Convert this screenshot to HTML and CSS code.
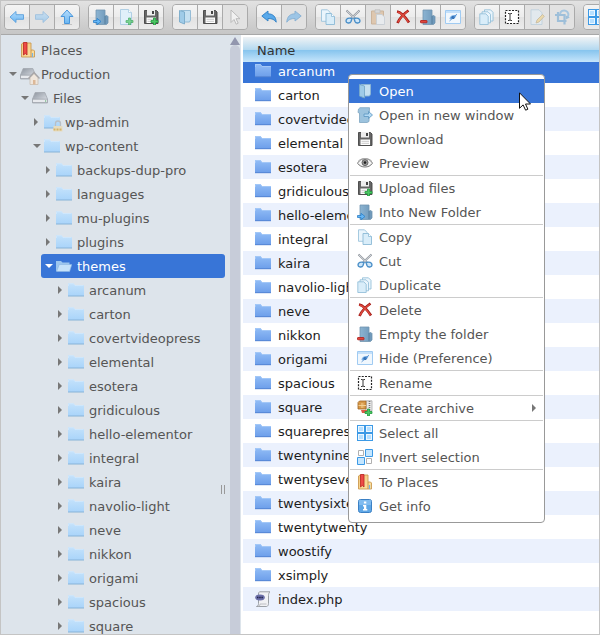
FILE: index.html
```html
<!DOCTYPE html>
<html lang="en">
<head>
    <meta charset="UTF-8">
    <meta name="viewport" content="width=device-width, initial-scale=1.0">
    <title>File Manager</title>
    <link rel="stylesheet" href="styles.css">
</head>
<body>

    <svg class="sprite" aria-hidden="true">
        <defs>
            <linearGradient id="gBlue" x1="0" y1="0" x2="0" y2="1"><stop offset="0" stop-color="#b4dcfc"/><stop offset="1" stop-color="#6ab6f2"/></linearGradient>
            <linearGradient id="gDir" x1="0" y1="0" x2="0" y2="1"><stop offset="0" stop-color="#92bdf6"/><stop offset="1" stop-color="#6c9eea"/></linearGradient>
            <linearGradient id="gNav" x1="0" y1="0" x2="0" y2="1"><stop offset="0" stop-color="#c4e2fb"/><stop offset="1" stop-color="#a9d4fa"/></linearGradient>
            <linearGradient id="gSteel" x1="0" y1="0" x2="1" y2="0"><stop offset="0" stop-color="#8cb4d2"/><stop offset="1" stop-color="#6c96b8"/></linearGradient>
            <linearGradient id="gDrive" x1="0" y1="0" x2="1" y2="1"><stop offset="0" stop-color="#8d949e"/><stop offset="1" stop-color="#e6eaf0"/></linearGradient>
            <linearGradient id="gGold" x1="0" y1="0" x2="1" y2="1"><stop offset="0" stop-color="#f3c87c"/><stop offset="1" stop-color="#fbe3a6"/></linearGradient>
        </defs>

        <symbol id="back" viewBox="0 0 16 16"><path d="M1 8 7 2.500v3.200h7.500v4.600H7v3.200z" fill="url(#gBlue)" stroke="#5a9fdc" stroke-width=".9"/></symbol>
        <symbol id="forward" viewBox="0 0 16 16"><path d="M15 8 9 2.500v3.200H1.500v4.600H9v3.200z" fill="url(#gBlue)" stroke="#5a9fdc" stroke-width=".9"/></symbol>
        <symbol id="up" viewBox="0 0 16 16"><path d="M8 1 14 7.500h-3.500v7h-5v-7H2z" fill="url(#gBlue)" stroke="#3d8fd8" stroke-width=".9"/><path d="M3 15.500h10" stroke="#aaa" opacity=".6"/></symbol>

        <symbol id="box" viewBox="0 0 16 16"><path d="M3 1h9v6l2-.5 1 1v6.500L13.500 15.500H3z" fill="url(#gSteel)" stroke="#7295b0" stroke-width=".8"/><path d="M12 7v8" stroke="#4e7796" stroke-width=".8"/></symbol>
        <symbol id="into" viewBox="0 0 16 16"><use href="#box"/><path d="M.5 11.500H4V9.300L8 12.500l-4 3.200v-2.200H.500z" fill="#65b6f5" stroke="#2b7fc8" stroke-width=".8"/></symbol>
        <symbol id="empty" viewBox="0 0 16 16"><use href="#box"/><rect x=".5" y="11.500" width="6.500" height="2.300" rx=".5" fill="#e0473c" stroke="#b01c18" stroke-width=".8"/></symbol>
        <symbol id="newwin" viewBox="0 0 16 16"><path d="M1.500 2 3 .7h9.500L12 14.500l-2 1H2.500V6L1 5.500z" fill="#9cc3de" stroke="#7fa6c2" stroke-width=".8"/><path d="M7 7h4.500V4.500L15.500 8l-4 3.500V9.500H7z" fill="#b4daf4" stroke="#5b96c0" stroke-width=".8"/></symbol>

        <symbol id="plus" viewBox="0 0 16 16"><path d="M10.500 9h2v2.500H15v2h-2.500V16h-2v-2.500H8v-2h2.500z" fill="#4cc763" stroke="#1f9a3c" stroke-width=".8"/></symbol>
        <symbol id="newfile" viewBox="0 0 16 16"><path d="M2.500.500h8l3 3v12h-11z" fill="#e1f0fa" stroke="#a9cbe2" stroke-width=".9"/><path d="M10.500.500v3h3" fill="#fff" stroke="#a9cbe2" stroke-width=".8"/><g opacity=".7"><use href="#plus"/></g></symbol>
        <symbol id="save" viewBox="0 0 16 16"><path d="M1.500 1.500h12l1.500 1.500v11.500H1.500z" fill="#666" stroke="#444" stroke-width=".9"/><path d="M4 1h8v5.500H4z" fill="#eee"/><path d="M9 2h2v3H9z" fill="#444"/><path d="M3.500 8.500h9.500V14H3.500z" fill="#fff"/><path d="M4.500 10.300h7.500M4.500 12.300h7.500" stroke="#bbb" stroke-width=".8"/></symbol>
        <symbol id="upload" viewBox="0 0 16 16"><use href="#save"/><use href="#plus"/></symbol>

        <symbol id="open" viewBox="0 0 16 16"><path d="M4 1.500h9.500v9.500l-1 2H8" fill="#c5e0f1" stroke="#8db7d2" stroke-width=".9"/><path d="M2.500 1.500 7.500 3v12l-5-2z" fill="#9fcbe8" stroke="#78a9c8" stroke-width=".9"/></symbol>
        <symbol id="select" viewBox="0 0 16 16"><path d="M4 1v12.500l3-3 2.200 4.700 2-1L9 9.700h4z" fill="#fff" stroke="#888" stroke-width=".9"/></symbol>
        <symbol id="undo" viewBox="0 0 16 16"><path d="M.8 7 7 2v2.800c5 0 8 3 8.200 8.400C13.500 10.500 11 9.500 7 9.500V12z" fill="#59a9ea" stroke="#2f7fc4" stroke-width=".9"/></symbol>
        <symbol id="redo" viewBox="0 0 16 16"><path d="M15.200 7 9 2v2.800C4 4.800 1 7.800.8 13.200 2.500 10.500 5 9.500 9 9.500V12z" fill="#59a9ea" stroke="#2f7fc4" stroke-width=".9"/></symbol>

        <symbol id="copy" viewBox="0 0 16 16"><path d="M1.500.800h6l2.500 2.500v9H1.500z" fill="#eaf5fc" stroke="#9cc4dc" stroke-width=".9"/><path d="M6 4.500h5.500L14.500 7.500v8H6z" fill="#d9edf9" stroke="#8cbad6" stroke-width=".9"/><path d="M11.500 4.500v3h3" fill="#fff" stroke="#8cbad6" stroke-width=".8"/></symbol>
        <symbol id="duplicate" viewBox="0 0 16 16"><path d="M5.500.800h6l2.500 2.500V12H5.500z" fill="#eaf5fc" stroke="#8cbad6" stroke-width=".8"/><path d="M3 2.800h6L11.500 5.300v8.500H3z" fill="#eaf5fc" stroke="#8cbad6" stroke-width=".8"/><path d="M.800 4.800h6L9.200 7.300v8.200H.800z" fill="#d9edf9" stroke="#8cbad6" stroke-width=".8"/></symbol>
        <symbol id="cut" viewBox="0 0 16 16"><path d="M1.500 1.500 11.500 11M14.500 1.500 4.500 11" stroke="#8e949b" stroke-width="1.900"/><path d="M2 2 11.500 11M14 2 4.500 11" stroke="#e6e9ec" stroke-width=".8"/><path d="M9 9.500c3-1 6 0 6 2.500 0 2.200-4 3-5 .5zM7 9.500c-3-1-6 0-6 2.500 0 2.200 4 3 5 .5z" fill="#cfe6f8" stroke="#4a8fc8" stroke-width="1.400"/></symbol>
        <symbol id="paste" viewBox="0 0 16 16"><path d="M1.500 2h12v13h-12z" fill="#d9ac7c" stroke="#b38557"/><path d="M5 .8h5V4H5z" fill="#ccc" stroke="#999" stroke-width=".8"/><path d="M6.500 5.500H12l2.500 2.500v7.500h-8z" fill="#eef4fa" stroke="#a8b8c8" stroke-width=".8"/></symbol>
        <symbol id="delete" viewBox="0 0 16 16"><path d="M2 2.500c3 .5 8 5 12 11M13.500 1.500C9 4.500 5 8.500 2.500 14" fill="none" stroke="#a51d18" stroke-width="2.700"/><path d="M2.500 3c3 .8 7 4.500 10.800 9.800M12.800 2.300C9 5 5.200 8.800 3 13.200" fill="none" stroke="#de4a3e" stroke-width="1.400"/></symbol>
        <symbol id="hide" viewBox="0 0 16 16"><path d="M.5 1.500h15v13H.500z" fill="#f0f7fd" stroke="#a0cbf2"/><path d="M1 2h14v2H1z" fill="#c4e0fa"/><path d="M4.500 10c0-3 3-4.500 7-4-.5 3-3 5-7 4z" fill="#7bb0e6"/><circle cx="8" cy="8.500" r="1.600" fill="#2868b0"/><path d="m4.500 12 7.500-7" stroke="#4a88cc" stroke-width=".8"/></symbol>
        <symbol id="rename" viewBox="0 0 16 16"><path d="M1.500 1.500h13v13h-13z" fill="#fff" stroke="#222" stroke-width="1.200" stroke-dasharray="2 1.250"/><path d="M4 4.500h1.200l.8.500.800-.500H8M4 11.500h1.200L6 11l.8.500H8M6 5v6" fill="none" stroke="#222" stroke-width=".9"/></symbol>
        <symbol id="edit" viewBox="0 0 16 16"><path d="M2 .8h8l3 3v11.700H2z" fill="#e1f0fa" stroke="#9cbed6" stroke-width=".9"/><path d="m7 14 1-3 5.500-5.500 1.800 1.800L10 13z" fill="#f4cf74" stroke="#a98e58" stroke-width=".8"/></symbol>
        <symbol id="resize" viewBox="0 0 16 16"><path d="M1 6h9.500v9.500M4 3v9h8.500" fill="none" stroke="#5b9bd0" stroke-width="2.200"/><path d="M6 5a4.200 4.200 0 1 1 7.500 3.200" fill="none" stroke="#6ba9dc" stroke-width="2"/><path d="m15.800 8.500-4 2-.3-4.300z" fill="#5b9bd0"/></symbol>
        <symbol id="eye" viewBox="0 0 16 16"><path d="M.5 8.200C3 4.500 5.500 3.800 8 3.800s5.200.700 7.500 4.400C13.500 11 11 12 8 12S2.500 11 .5 8.200z" fill="#f4f4f4" stroke="#777"/><circle cx="8" cy="7.600" r="3" fill="#999" stroke="#666"/><circle cx="8" cy="7.600" r="1.300" fill="#222"/><path d="M1 6.500C4 2.500 12 2.500 15 6.500" fill="none" stroke="#aaa"/></symbol>
        <symbol id="archive" viewBox="0 0 16 16"><path d="M9 .8h6v10H9z" fill="#e8e8e8" stroke="#aaa" stroke-width=".8"/><path d="M12.500 1v9" stroke="#777" stroke-width="1.600" stroke-dasharray="1 1"/><path d="M1 2.500 2.500 1H9v8H1z" fill="#d79848" stroke="#9f6525" stroke-width=".8"/><path d="M1.500 5.500H9M4 4h2.500M4 7h2.500" stroke="#fae0a8" stroke-width=".8"/><path d="M4 10h6v3H5z" fill="#df5848"/><use href="#plus"/></symbol>
        <symbol id="selectall" viewBox="0 0 16 16"><path d="M0 0h16v16H0z" fill="#3c9ae6"/><path d="M1 1h6v6H1zM9 1h6v6H9zM1 9h6v6H1zM9 9h6v6H9z" fill="#edf7ff"/><path d="M2 2h4v4H2zM10 2h4v4h-4zM2 10h4v4H2zM10 10h4v4h-4z" fill="#b7e0ff"/></symbol>
        <symbol id="invert" viewBox="0 0 16 16"><path d="M1.500 1.500h5v5h-5zM9.500 9.500h5v5h-5z" fill="#fff" stroke="#b0b0b0"/><path d="M8.500.500h7v7h-7zM.500 8.500h7v7h-7z" fill="#c4e6ff" stroke="#3c9ae6"/></symbol>
        <symbol id="places" viewBox="0 0 16 16"><path d="M1.500 2 3 1h8v7h2.500l1 1v6h-13z" fill="url(#gGold)" stroke="#cc9a50" stroke-width=".9"/><path d="M11 8v7" stroke="#cc8f43" stroke-width=".9"/><path d="M12.500 11v4" stroke="#79b3e0" stroke-width="1.200"/><path d="M3.500.5h3.500v12.500l-1.700-1.500L3.500 13z" fill="#ed4a47" stroke="#b82522" stroke-width=".8"/></symbol>
        <symbol id="info" viewBox="0 0 16 16"><rect x="1.500" y="1.500" width="13" height="13" rx="2" fill="#5fa7e6" stroke="#3b80c4"/><path d="M2 2h12v5H2z" fill="#8fc5f4" opacity=".7"/><path d="M6.900 3.500h2.400v2H6.900zM6 7h3.300v4h1v1.500H6V11h1V8.500H6z" fill="#fff"/></symbol>

        <symbol id="navdir" viewBox="0 0 16 16"><path d="M0 2.500V1.300h5.500L7 3h9v11H0z" fill="url(#gNav)"/><path d="M0 14h16" stroke="#88b3d8" stroke-width="1"/><path d="M.5 4V1.800h5L7 3.500h8.500" fill="none" stroke="#d3e9fc" stroke-width=".8"/></symbol>
        <symbol id="navopen" viewBox="0 0 16 16"><path d="M0 13V3h5l1.500 1.500h7V13z" fill="#9cc6ee"/><path d="m.5 13.500 2.800-7h12.500l-2.200 7z" fill="#c5e2fa" stroke="#8ab6e2" stroke-width=".6"/></symbol>
        <symbol id="dir" viewBox="0 0 16 16"><path d="M0 2V1h5.500L7 3h9v11H0z" fill="url(#gDir)"/><path d="M0 13.700h16" stroke="#5586d4" stroke-width="1"/><path d="M.4 4V1.500h5L7 3.500h9" fill="none" stroke="#a8cbf8" stroke-width=".8"/></symbol>
        <symbol id="drive" viewBox="0 0 16 16"><path d="M3.200 2.500h9.600l2.700 6.500v4H.5V9z" fill="url(#gDrive)" stroke="#a3a8b0" stroke-width=".8"/><path d="M.5 9.200h15v3.300H.5z" fill="#e7e9ed" stroke="#999ea6" stroke-width=".7"/><path d="M13 11h1.200" stroke="#48a860" stroke-width="1.200"/></symbol>
        <symbol id="badgelock" viewBox="0 0 10 12"><path d="M2.500 6V3.500a2.500 2.500 0 0 1 5 0V6" fill="none" stroke="#b9bfc5" stroke-width="1.300"/><path d="M.500 6h9v5.500h-9z" fill="#e6dcc0"/><path d="M.500 9.500h9" stroke="#d6b468" stroke-width="2" stroke-dasharray="2 1"/></symbol>
        <symbol id="badgehome" viewBox="0 0 12 14"><path d="M2 6.500 6 2.500l4 4v7H2z" fill="#efe6dc" stroke="#c9bdb0" stroke-width=".8"/><path d="M.500 7.500 6 1.500l5.500 6" fill="none" stroke="#a7a6a8" stroke-width="1.400"/><path d="M5 9h2.500v4.500H5z" fill="#dcb898"/></symbol>
        <symbol id="php" viewBox="0 0 16 16"><path d="M4.500.800h10.500c-1 .7-1.500 2-1.500 3.700v8c0 1.500-.8 3-2 3H1.500c1.500-.5 2-1.500 2-3V3c0-1 .3-1.700 1-2.200z" fill="#f0f1f4" stroke="#92969c" stroke-width=".9"/><path d="M3 15.300c1.500.2 2-1 2-2.300h6.500" fill="none" stroke="#b0b3b8" stroke-width=".8"/><ellipse cx="5" cy="6.500" rx="4.800" ry="3" fill="#6c70aa"/><path d="M2 6.500h6" stroke="#20224c" stroke-width="1.300" stroke-dasharray="1.500 .700"/></symbol>
    </svg>

    <div class="toolbar">
        <div class="group">
            <button title="Back"><svg><use href="#back"/></svg></button>
            <button title="Forward" disabled><svg><use href="#forward"/></svg></button>
            <button title="Up"><svg><use href="#up"/></svg></button>
        </div>
        <div class="group">
            <button title="New folder"><svg><use href="#into"/></svg></button>
            <button title="New file"><svg><use href="#newfile"/></svg></button>
            <button title="Upload files"><svg><use href="#upload"/></svg></button>
        </div>
        <div class="group">
            <button title="Open"><svg><use href="#open"/></svg></button>
            <button title="Download"><svg><use href="#save"/></svg></button>
            <button title="Get link" disabled><svg><use href="#select"/></svg></button>
        </div>
        <div class="group">
            <button title="Undo"><svg><use href="#undo"/></svg></button>
            <button title="Redo" disabled><svg><use href="#redo"/></svg></button>
        </div>
        <div class="group">
            <button title="Copy"><svg><use href="#copy"/></svg></button>
            <button title="Cut"><svg><use href="#cut"/></svg></button>
            <button title="Paste" disabled><svg><use href="#paste"/></svg></button>
            <button title="Delete"><svg><use href="#delete"/></svg></button>
            <button title="Empty the folder"><svg><use href="#empty"/></svg></button>
            <button title="Hide"><svg><use href="#hide"/></svg></button>
        </div>
        <div class="group">
            <button title="Duplicate"><svg><use href="#duplicate"/></svg></button>
            <button title="Rename"><svg><use href="#rename"/></svg></button>
            <button title="Edit file" disabled><svg><use href="#edit"/></svg></button>
            <button title="Resize and rotate" disabled><svg><use href="#resize"/></svg></button>
        </div>
        <div class="group">
            <button title="Select all"><svg><use href="#selectall"/></svg></button>
            <button title="Invert selection"><svg><use href="#invert"/></svg></button>
        </div>
    </div>

    <div class="workzone">
        <nav class="tree" id="tree"></nav>
        <div class="scrollbar"><span class="scroll-up"></span><span class="thumb"></span></div>
        <div class="cwd">
            <table>
                <thead>
                    <tr><th>Name</th></tr>
                </thead>
                <tbody id="files"></tbody>
            </table>
        </div>
        <span class="handle"></span>
    </div>

    <div class="contextmenu">
        <button class="hover"><svg><use href="#open"/></svg>Open</button>
        <button><svg><use href="#newwin"/></svg>Open in new window</button>
        <button><svg><use href="#save"/></svg>Download</button>
        <button><svg><use href="#eye"/></svg>Preview</button>
        <hr>
        <button><svg><use href="#upload"/></svg>Upload files</button>
        <button><svg><use href="#into"/></svg>Into New Folder</button>
        <hr>
        <button><svg><use href="#copy"/></svg>Copy</button>
        <button><svg><use href="#cut"/></svg>Cut</button>
        <button><svg><use href="#duplicate"/></svg>Duplicate</button>
        <hr>
        <button><svg><use href="#delete"/></svg>Delete</button>
        <button><svg><use href="#empty"/></svg>Empty the folder</button>
        <button><svg><use href="#hide"/></svg>Hide (Preference)</button>
        <hr>
        <button><svg><use href="#rename"/></svg>Rename</button>
        <hr>
        <button class="submenu"><svg><use href="#archive"/></svg>Create archive</button>
        <hr>
        <button><svg><use href="#selectall"/></svg>Select all</button>
        <button><svg><use href="#invert"/></svg>Invert selection</button>
        <hr>
        <button><svg><use href="#places"/></svg>To Places</button>
        <button><svg><use href="#info"/></svg>Get info</button>
    </div>

    <svg class="pointer" viewBox="0 0 12 19"><path d="M.5.800v15.500l3.600-3.400 2.500 5.300 2.300-1-2.400-5.200h5z" fill="#fff" stroke="#111"/></svg>

    <script>
        // name, level, arrow, icon, badge
        const tree = [
            ["Places", 0, "", "places"],
            ["Production", 0, "down", "drive", "home"],
            ["Files", 1, "down", "drive"],
            ["wp-admin", 2, "right", "navdir", "lock"],
            ["wp-content", 2, "down", "navdir"],
            ["backups-dup-pro", 3, "right", "navdir"],
            ["languages", 3, "right", "navdir"],
            ["mu-plugins", 3, "right", "navdir"],
            ["plugins", 3, "right", "navdir"],
            ["themes", 3, "down", "navopen"]
        ];

        const themes = [
            "arcanum", "carton", "covertvideopress", "elemental", "esotera", "gridiculous",
            "hello-elementor", "integral", "kaira", "navolio-light", "neve", "nikkon",
            "origami", "spacious", "square", "squarepress", "twentynineteen",
            "twentyseventeen", "twentysixteen", "twentytwenty", "woostify", "xsimply"
        ];

        themes.slice(0, 15).forEach(name => tree.push([name, 4, "right", "navdir"]));

        document.getElementById("tree").innerHTML = tree.map(([name, level, arrow, icon, badge]) => `
            <a href="#" class="level-${level} ${name === "themes" ? "active" : ""}">
                <span class="arrow ${arrow}"></span>
                <span class="icon"><svg><use href="#${icon}"/></svg>${badge ? `<svg class="badge ${badge}"><use href="#badge${badge}"/></svg>` : ""}</span>
                <span class="label">${name}</span>
            </a>`).join("");

        document.getElementById("files").innerHTML = [...themes, "index.php"].map(name => `
            <tr class="${name === "arcanum" ? "selected" : ""}">
                <td><svg><use href="#${name === "index.php" ? "php" : "dir"}"/></svg>${name}</td>
            </tr>`).join("");
    </script>

</body>
</html>
```
FILE: styles.css
```css
* { box-sizing: border-box; }
body {
    display: flex;
    flex-direction: column;
    height: 100vh;
    margin: 0;
    border: 1px solid #c4c4c4;
    overflow: hidden;
    background: #fff;
    font: 13px/18px "DejaVu Sans", Verdana, sans-serif;
    color: #555;
}
svg { display: block; flex: none; width: 16px; height: 16px; }
button { font: inherit; color: inherit; }
.sprite { position: absolute; width: 0; height: 0; }

/* toolbar */
.toolbar {
    display: flex;
    flex: none;
    gap: 8px;
    padding: 3px 3px 4px;
    overflow: hidden;
    background: linear-gradient(#e2e2e2, #c6c6c6);
    border-bottom: 1px solid #a8a8a8;
}
.group {
    display: flex;
    flex: none;
    border: 1px solid #aaa;
    border-radius: 4px;
    overflow: hidden;
}
.group button {
    width: 25px;
    height: 24px;
    padding: 4px;
    border: 0;
    border-right: 1px solid #aaa;
    background: linear-gradient(#f4f4f4, #ececec 50%, #e2e2e2 50%, #ebebeb);
}
.group button:last-child { width: 24px; border-right: 0; }
.group button:disabled { background: #e2e2e2; }
.group button:disabled svg { opacity: .5; }

.workzone { position: relative; display: flex; flex: 1; min-height: 0; }

/* folder tree */
.tree {
    width: 228px;
    flex: none;
    padding: 3px 4px 0;
    overflow: hidden;
    background: #dde4eb;
}
.tree a {
    display: flex;
    align-items: center;
    height: 24px;
    padding-left: 4px;
    border-radius: 3px;
    color: #555;
    text-decoration: none;
    white-space: nowrap;
}
.tree .level-1 { margin-left: 12px; }
.tree .level-2 { margin-left: 24px; }
.tree .level-3 { margin-left: 36px; }
.tree .level-4 { margin-left: 48px; }
.tree .active { background: #3875d7; color: #fff; }
.label { padding-top: 2px; }
.arrow { width: 11px; color: #777; }
.active .arrow { color: #fff; }
.arrow::before { content: ""; display: block; width: 0; border: 4px solid transparent; }
.arrow.down::before { border-top-color: currentColor; border-bottom: 0; }
.arrow.right::before { margin-left: 1px; border-left-color: currentColor; border-right: 0; }
.icon { position: relative; margin-right: 5px; }
.badge { position: absolute; }
.badge.lock { right: -3px; bottom: -2px; width: 10px; height: 12px; }
.badge.home { right: -4px; bottom: -3px; width: 12px; height: 14px; }

.scrollbar { display: flex; flex-direction: column; width: 12px; flex: none; padding: 2px 1px 0; background: #dde4eb; }
.scroll-up { border: 5px solid transparent; border-top: 0; border-bottom: 8px solid #9296ae; }
.thumb { flex: 1; background: #c7ccd9; border-radius: 5px 5px 0 0; }
.handle {
    position: absolute;
    left: 220px;
    top: 450px;
    width: 4px;
    height: 9px;
    border: 1px solid #999;
    border-width: 0 1px;
}

/* file list */
.cwd { flex: 1; padding: 2px 0 0 2px; overflow: hidden; }
.cwd table { width: 100%; border-collapse: collapse; }
.cwd th {
    height: 25px;
    padding: 2px 14px 0;
    background: linear-gradient(#f0f3f5, #b4d9f0 50%, #88c5ee 54%, #c6e5fb);
    color: #333;
    font-weight: normal;
    text-align: left;
}
.cwd td {
    display: flex;
    align-items: center;
    gap: 7px;
    height: 24px;
    padding: 2px 12px 0;
    color: #1c1c1c;
}
.cwd td svg { margin-bottom: 2px; }
.cwd tbody tr:nth-child(odd) { background: #ebf1fd; }
.cwd tbody tr.selected:nth-child(n) { background: #3875d7; }
.cwd .selected td { height: 21px; padding-top: 0; padding-bottom: 1px; color: #fff; }

/* context menu */
.contextmenu {
    position: absolute;
    left: 348px;
    top: 74px;
    width: 197px;
    padding: 4px 0;
    background: #fff;
    border: 1px solid #999;
    border-radius: 4px;
}
.contextmenu button {
    display: flex;
    align-items: center;
    gap: 6px;
    width: 100%;
    height: 24px;
    padding: 2px 8px 0;
    border: 0;
    background: none;
    text-align: left;
    white-space: nowrap;
}
.contextmenu svg { margin-bottom: 2px; }
.contextmenu .hover { background: #3875d7; color: #fff; }
.contextmenu hr { height: 1px; margin: 0 1px; border: 0; background: #ccc; }
.submenu::after { content: ""; margin: 0 0 2px auto; border: 4px solid transparent; border-left-color: #777; border-right: 0; }
.pointer { position: absolute; left: 519px; top: 92px; width: 12px; height: 19px; }
```
